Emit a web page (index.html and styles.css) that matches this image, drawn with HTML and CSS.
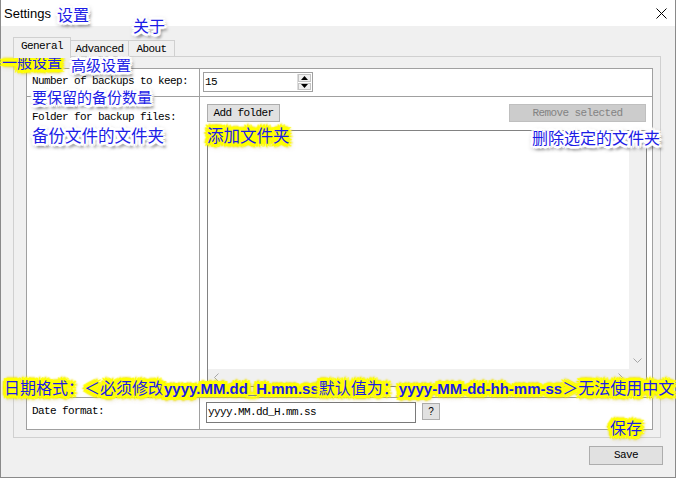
FILE: index.html
```html
<!DOCTYPE html>
<html>
<head>
<meta charset="utf-8">
<title>Settings</title>
<link rel="stylesheet" href="styles.css">
</head>
<body>
<div class="window">
  <div class="titlebar">
    <span class="title">Settings</span>
    <svg class="close" width="11" height="11" viewBox="0 0 11 11"><path d="M0.5 0.5L10.5 10.5M10.5 0.5L0.5 10.5" stroke="#000" stroke-width="1" fill="none"/></svg>
  </div>
  <div class="tabs">
    <div class="tab active t-general">General</div>
    <div class="tab t-advanced">Advanced</div>
    <div class="tab t-about">About</div>
  </div>
  <div class="page">
    <div class="grid">
      <div class="label row1">Number of backups to keep:</div>
      <div class="field row1 f1">
        <div class="spin">
          <span class="spin-val">15</span>
          <div class="spin-btns">
            <span class="sb"><svg width="7" height="4" viewBox="0 0 7 4"><path d="M3.5 0L7 4H0Z" fill="#000"/></svg></span>
            <span class="sb"><svg width="7" height="4" viewBox="0 0 7 4"><path d="M0 0H7L3.5 4Z" fill="#000"/></svg></span>
          </div>
        </div>
      </div>
      <div class="label row2 l2">Folder for backup files:</div>
      <div class="field row2 f2">
        <div class="btnrow">
          <button class="btn add">Add folder</button>
          <button class="btn remove" disabled>Remove selected</button>
        </div>
        <div class="list">
          <div class="list-area"></div>
          <div class="vscroll">
            <span class="arrow"><svg width="9" height="5" viewBox="0 0 9 5"><path d="M0.5 4.5L4.5 0.5L8.5 4.5" stroke="#a6a6a6" fill="none"/></svg></span>
            <span class="arrow"><svg width="9" height="5" viewBox="0 0 9 5"><path d="M0.5 0.5L4.5 4.5L8.5 0.5" stroke="#a6a6a6" fill="none"/></svg></span>
          </div>
          <div class="hscroll">
            <span class="arrow"><svg width="5" height="9" viewBox="0 0 5 9"><path d="M4.5 0.5L0.5 4.5L4.5 8.5" stroke="#a6a6a6" fill="none"/></svg></span>
            <span class="arrow"><svg width="5" height="9" viewBox="0 0 5 9"><path d="M0.5 0.5L4.5 4.5L0.5 8.5" stroke="#a6a6a6" fill="none"/></svg></span>
          </div>
          <div class="corner"></div>
        </div>
      </div>
      <div class="label row3 l3">Date format:</div>
      <div class="field row3 f3">
        <div class="input">yyyy.MM.dd_H.mm.ss</div>
        <button class="btn q">?</button>
      </div>
    </div>
  </div>
  <div class="footer">
    <button class="btn save">Save</button>
  </div>

  <div class="note w n-settings">设置</div>
  <div class="note w n-about">关于</div>
  <div class="note y n-general">一般设置</div>
  <div class="note w n-advanced">高级设置</div>
  <div class="note w n-backups">要保留的备份数量</div>
  <div class="note w n-folder">备份文件的文件夹</div>
  <div class="note y n-add">添加文件夹</div>
  <div class="note w n-remove">删除选定的文件夹</div>
  <div class="note y n-date">日期格式：＜必须修改<b>yyyy.MM.dd_H.mm.ss</b>默认值为：<b>yyyy-MM-dd-hh-mm-ss</b>＞无法使用中文</div>
  <div class="note y n-save">保存</div>
</div>
</body>
</html>
```
FILE: styles.css
```css
* { box-sizing: border-box; }

body {
  margin: 0;
  background: #f0f0f0;
  font-family: "Liberation Mono", "DejaVu Sans Mono", monospace;
  font-size: 11px;
  letter-spacing: -0.6px;
  color: #000;
}

.window {
  position: relative;
  width: 676px;
  height: 478px;
  background: #f0f0f0;
  border: 1px solid #8a8a8a;
  border-top: 0;
  display: flex;
  flex-direction: column;
}

.titlebar {
  flex: none;
  height: 26px;
  background: #fff;
  display: flex;
  align-items: center;
  padding-left: 3px;
}

.title {
  font-family: "Liberation Sans", Arial, sans-serif;
  font-size: 13px;
  letter-spacing: 0;
}

.close { margin-left: auto; margin-right: 8px; }

.tabs {
  flex: none;
  display: flex;
  align-items: flex-start;
  height: 19px;
  margin: 11px 0 0 12px;
}

.tab {
  height: 16px;
  margin-top: 3px;
  margin-left: -1px;
  border: 1px solid #d0d0d0;
  border-bottom: 0;
  background: #f0f0f0;
  padding-top: 2px;
  line-height: 12px;
  text-align: center;
}

.tab.active {
  height: 21px;
  margin-top: 0;
  margin-left: 0;
  position: relative;
  z-index: 1;
  background: #f0f0f0;
  padding-top: 2px;
}

.t-general { width: 58px; }
.t-advanced { width: 59px; }
.t-about { width: 47px; }

.page {
  flex: none;
  margin-left: 12px;
  width: 648px;
  height: 382px;
  border: 1px solid #d0d0d0;
  background: #f0f0f0;
  padding: 11px 0 0 12px;
}

.grid {
  width: 627px;
  height: 362px;
  display: grid;
  grid-template-columns: 173px 1fr;
  grid-template-rows: 28px 301px 31px;
  border: 1px solid #a0a0a0;
  background: #fff;
}

.label {
  border-right: 1px solid #a0a0a0;
  padding: 6px 0 0 5px;
  line-height: 13px;
  white-space: nowrap;
}

.row1, .row2 { border-bottom: 1px solid #a0a0a0; }

.l2 { padding-top: 14px; }
.l3 { padding-top: 7px; }

.f1 { padding: 3px 0 0 3px; }

.spin {
  width: 110px;
  height: 20px;
  border: 1px solid #a0a0a0;
  display: flex;
  align-items: center;
  background: #fff;
}

.spin-val { padding-left: 1px; line-height: 13px; }

.spin-btns {
  margin-left: auto;
  margin-right: 1px;
  width: 14px;
  height: 16px;
  display: flex;
  flex-direction: column;
  gap: 1px;
  border-left: 1px solid #dcdcdc;
}

.sb {
  flex: 1;
  display: flex;
  align-items: center;
  justify-content: center;
  background: #f0f0f0;
  border: 1px solid #c4c4c4;
}

.f2 {
  padding: 7px 5px 0 7px;
  display: flex;
  flex-direction: column;
}

.btnrow {
  display: flex;
  justify-content: space-between;
  padding-right: 1px;
}

.btn {
  font-family: "Liberation Mono", "DejaVu Sans Mono", monospace;
  font-size: 11px;
  letter-spacing: -0.6px;
  color: #000;
  background: #e1e1e1;
  border: 1px solid #adadad;
  padding: 0;
  margin: 0;
  line-height: 13px;
  text-align: center;
}

.add { width: 73px; height: 18px; }

.remove {
  width: 137px;
  height: 18px;
  background: #cccccc;
  border-color: #bfbfbf;
  color: #838383;
}

.list {
  margin-top: 8px;
  width: 440px;
  height: 257px;
  border: 1px solid #828282;
  background: #f0f0f0;
  display: grid;
  grid-template-columns: 1fr 17px;
  grid-template-rows: 1fr 17px;
}

.list-area { background: #fff; }

.vscroll {
  display: flex;
  flex-direction: column;
  justify-content: space-between;
}

.hscroll {
  display: flex;
  justify-content: space-between;
}

.arrow {
  width: 17px;
  height: 17px;
  display: flex;
  align-items: center;
  justify-content: center;
}

.f3 {
  padding: 4px 0 0 6px;
  display: flex;
  align-items: flex-start;
  gap: 6px;
}

.input {
  width: 210px;
  height: 21px;
  border: 1px solid #7a7a7a;
  background: #fff;
  padding: 3px 0 0 1px;
  line-height: 13px;
}

.q {
  width: 18px;
  height: 17px;
  margin-top: 1px;
  font-family: "Liberation Sans", Arial, sans-serif;
  font-size: 10px;
  letter-spacing: 0;
}

.footer {
  flex: none;
  display: flex;
  justify-content: flex-end;
  padding: 8px 12px 0 0;
}

.save { width: 74px; height: 19px; }

/* annotations over the window */
.note {
  position: absolute;
  font-family: "Noto Sans CJK SC", "Noto Sans", sans-serif;
  font-size: 16px;
  line-height: 1;
  letter-spacing: 0;
  color: #1c1ce6;
  white-space: nowrap;
}

.note b {
  font-family: "Liberation Sans", Arial, sans-serif;
  font-weight: bold;
  font-size: 15px;
}

.note.w {
  text-shadow:
    1px 0 0 #fff, -1px 0 0 #fff, 0 1px 0 #fff, 0 -1px 0 #fff,
    2px 0 0 #fff, -2px 0 0 #fff, 0 2px 0 #fff, 0 -2px 0 #fff,
    2px 2px 0 #fff, -2px -2px 0 #fff, 2px -2px 0 #fff, -2px 2px 0 #fff,
    3px 1px 1px #fff, -3px 1px 1px #fff, 0 3px 1px #fff, 0 -3px 1px #fff,
    3px 4px 3px rgba(0, 0, 0, 0.6), -1px 3px 4px rgba(0, 0, 0, 0.45), 2px 0 4px rgba(0, 0, 0, 0.35);
}

.note.y {
  text-shadow:
    1px 0 0 #ff0, -1px 0 0 #ff0, 0 1px 0 #ff0, 0 -1px 0 #ff0,
    2px 0 0 #ff0, -2px 0 0 #ff0, 0 2px 0 #ff0, 0 -2px 0 #ff0,
    2px 2px 0 #ff0, -2px -2px 0 #ff0, 2px -2px 0 #ff0, -2px 2px 0 #ff0,
    3px 0 0 #ff0, -3px 0 0 #ff0, 0 3px 0 #ff0, 0 -3px 0 #ff0,
    3px 3px 1px #ff0, -3px -3px 1px #ff0, 3px -3px 1px #ff0, -3px 3px 1px #ff0,
    4px 0 2px #f0e000, -4px 0 2px #f0e000, 0 4px 2px #f0e000, 0 -4px 2px #f0e000,
    2px 3px 5px rgba(150, 120, 0, 0.7);
}

.n-settings { left: 56px; top: 6px; }
.n-about { left: 132px; top: 17px; }
.n-general { left: 1px; top: 54px; font-size: 15px; }
.n-advanced { left: 70px; top: 57px; font-size: 15px; }
.n-backups { left: 31px; top: 89px; font-size: 15px; }
.n-folder { left: 31px; top: 127px; font-size: 16.5px; }
.n-add { left: 206px; top: 127px; font-size: 16.5px; }
.n-remove { left: 531px; top: 129px; }
.n-date { left: 3px; top: 379px; }
.n-save { left: 609px; top: 419px; }
```
